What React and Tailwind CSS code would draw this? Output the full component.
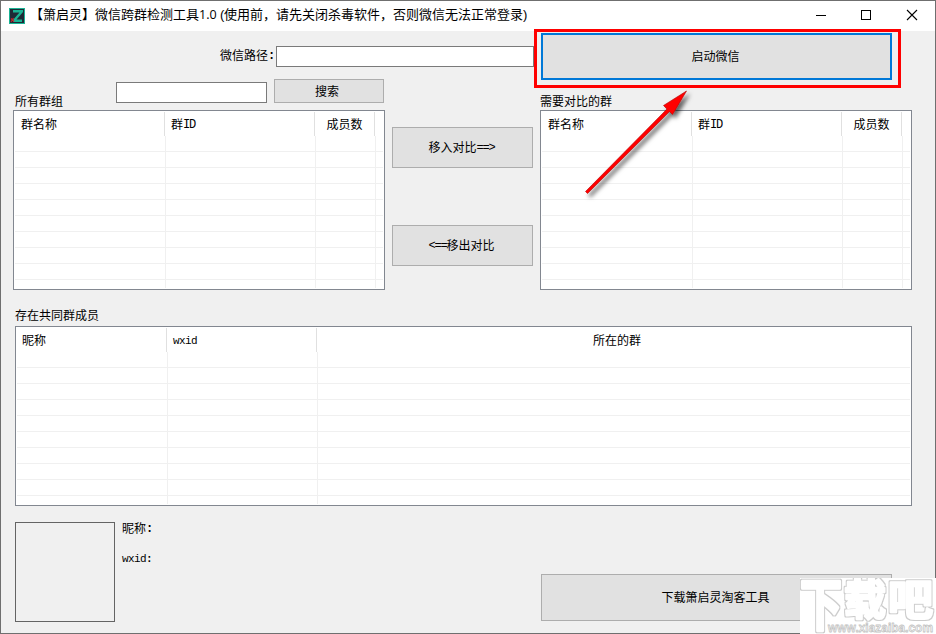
import React from "react";
import clsx from "clsx";

const groupColumns = [
  { label: "群名称", width: "w-[150px]", pad: "pl-1.5" },
  { label: "群", suffix: "ID", width: "w-[150px]", pad: "pl-1.5" },
  { label: "成员数", width: "w-[60px]", center: true },
];

const memberColumns = [
  { label: "昵称", width: "w-[150px]", pad: "pl-[5px]" },
  { suffix: "wxid", width: "w-[150px]", pad: "pl-1.5" },
  { label: "所在的群", width: "w-[600px]", center: true, last: true },
];

// half-width characters, 6px each
function Mono({ children, className }) {
  return (
    <span
      className={clsx(
        "inline-block font-['Liberation_Mono',monospace] leading-3",
        className || "text-xs tracking-[-1.2px]",
      )}
    >
      {children}
    </span>
  );
}

function Button({ children, primary, className }) {
  return (
    <button
      className={clsx(
        "flex shrink-0 items-center justify-center bg-[#e1e1e1]",
        primary ? "border-2 border-[#0078d7]" : "border border-[#adadad]",
        className,
      )}
    >
      {children}
    </button>
  );
}

function ListView({ columns, className }) {
  return (
    <div
      className={clsx(
        "flex h-[180px] shrink-0 flex-col overflow-hidden border border-[#828790] bg-white p-px",
        className,
      )}
    >
      <div className="flex h-6 shrink-0">
        {columns.map((col, idx) => (
          <div
            key={idx}
            className={clsx(
              "flex shrink-0 items-center pt-0.5",
              col.width,
              col.center ? "justify-center" : col.pad,
              !col.last && "border-r border-[#e0e0e0]",
            )}
          >
            {col.label}
            {col.suffix && (
              <Mono className={!col.label && "text-[11px] tracking-[-0.6px]"}>
                {col.suffix}
              </Mono>
            )}
          </div>
        ))}
      </div>
      <div className="grid flex-1 overflow-hidden">
        <div className="col-start-1 row-start-1 flex flex-col">
          {Array.from({ length: 9 }).map((_, idx) => (
            <div key={idx} className="h-4 shrink-0 border-b border-[#f0f0f0]" />
          ))}
        </div>
        <div className="col-start-1 row-start-1 flex pl-px">
          {columns.map((col, idx) => (
            <div
              key={idx}
              className={clsx(
                "shrink-0",
                col.last ? "w-px" : [col.width, "border-r border-[#f0f0f0]"],
              )}
            />
          ))}
        </div>
      </div>
    </div>
  );
}

function TitleBar() {
  return (
    <div className="flex h-[30px] shrink-0 items-center bg-white pl-2">
      <svg className="h-4 w-4 shrink-0" viewBox="0 0 16 16">
        <rect width="16" height="16" fill="#1ab394" />
        <rect x="1" y="1" width="14" height="14" fill="#1f2a36" />
        <path d="M4 2h10v2L7.5 11.500H13V14H4v-2l6.500-7.500H4z" fill="#1ab394" />
        <path d="M2 10.500l3 3M4.500 10l-2.500 4" stroke="#c4252c" strokeWidth="1.2" />
      </svg>
      <div className="flex flex-1 pb-0.5 pl-[5px] text-[13px] leading-4">
        <span className="w-[65px] whitespace-nowrap">【箫启灵】</span>
        <span className="w-[104px] whitespace-nowrap">微信跨群检测工具</span>
        <span className="w-[21px] font-['Open_Sans',sans-serif] text-[12.5px]">
          1.0
        </span>
        <span className="w-1">(</span>
        <span className="whitespace-nowrap">
          使用前，请先关闭杀毒软件，否则微信无法正常登录)
        </span>
      </div>
      <svg
        className="h-[30px] w-[120px] shrink-0"
        viewBox="0 0 120 30"
        fill="none"
        stroke="#000"
        shapeRendering="crispEdges"
      >
        <path d="M1 14.5h10" />
        <path d="M46.5 9.5h9v9h-9z" />
        <path d="M92 9l10 10M102 9L92 19" shapeRendering="auto" strokeWidth="1.1" />
      </svg>
    </div>
  );
}

function Arrow() {
  return (
    <svg
      className="absolute left-[570px] top-[80px] h-[130px] w-[140px]"
      viewBox="570 80 140 130"
    >
      <defs>
        <filter id="shadow" x="-20%" y="-20%" width="150%" height="150%">
          <feDropShadow dx="3" dy="3.5" stdDeviation="2" floodColor="#000" floodOpacity="0.6" />
        </filter>
      </defs>
      <g filter="url(#shadow)" fill="#f00" stroke="#b40000" strokeWidth="0.6">
        <path d="M585.5 191.5L667 109L663.5 105.5L686.5 91L672.5 114.5L669.5 111.5L587.5 193.5Z" />
      </g>
    </svg>
  );
}

function Watermark() {
  return (
    <div className="absolute left-[800px] top-[578px] h-14 w-[136px] overflow-hidden bg-white">
      <svg
        className="h-14 w-[136px]"
        viewBox="0 0 136 56"
        fill="#fff"
        stroke="#fff"
        strokeLinejoin="round"
        fontFamily="Noto Sans CJK SC, sans-serif"
        fontWeight="700"
      >
        <defs>
          <filter id="outline" x="-10%" y="-10%" width="120%" height="120%">
            <feMorphology in="SourceAlpha" operator="dilate" radius="1" result="grown" />
            <feFlood floodColor="#cccccc" />
            <feComposite in2="grown" operator="in" result="edge" />
            <feMerge>
              <feMergeNode in="edge" />
              <feMergeNode in="SourceGraphic" />
            </feMerge>
          </filter>
        </defs>
        <g filter="url(#outline)" strokeWidth="2.5">
          <text fontSize="42" transform="translate(0 47) scale(1 1.32)">
            下
          </text>
          <text x="44" y="37" fontSize="42">
            载
          </text>
          <text x="88" y="37" fontSize="42" textLength="45" lengthAdjust="spacingAndGlyphs">
            吧
          </text>
        </g>
        <text
          x="28"
          y="54"
          fontSize="12.5"
          stroke="#c4c4c4"
          strokeWidth="0.8"
          textLength="105"
          lengthAdjust="spacingAndGlyphs"
          fontFamily="Liberation Sans, sans-serif"
        >
          www.xiazaiba.com
        </text>
      </svg>
    </div>
  );
}

export default function App() {
  return (
    <div className="relative h-[634px] w-[936px] overflow-hidden font-['Liberation_Sans','Noto_Sans_CJK_SC',sans-serif] text-xs leading-3 text-black">
      <div className="flex h-[634px] flex-col overflow-hidden border border-[#6f6f6f] bg-[#f0f0f0]">
        <TitleBar />

        <div className="flex h-[79px] shrink-0">
          <div className="flex w-[533px] shrink-0 flex-col pt-[15px]">
            <div className="flex h-[21px] items-center pl-[219px]">
              <span className="w-12 whitespace-nowrap pb-0.5">微信路径</span>
              <Mono className="w-2 pb-0.5 text-xs font-bold">:</Mono>
              <input className="h-[21px] min-w-0 flex-1 border border-[#7a7a7a] bg-white" />
            </div>
            <div className="mt-3 flex pl-[14px]">
              <span className="w-[101px] pt-[17px]">所有群组</span>
              <input className="mt-[3px] h-[21px] w-[151px] border border-[#7a7a7a] bg-white" />
              <Button className="ml-[7px] h-6 w-[110px] pr-1 pt-0.5">搜索</Button>
            </div>
          </div>
          <div className="flex flex-col pt-0.5">
            <Button primary className="ml-[7px] h-[47px] w-[351px] pr-0.5">
              启动微信
            </Button>
            <span className="ml-[6px] mt-4">需要对比的群</span>
          </div>
        </div>

        <div className="flex shrink-0 pl-3">
          <ListView columns={groupColumns} className="w-[372px]" />
          <div className="flex w-[155px] shrink-0 flex-col items-center gap-[57px] pt-[17px]">
            <Button className="h-[41px] w-[141px] pr-0.5">
              移入对比<Mono>==&gt;</Mono>
            </Button>
            <Button className="h-[41px] w-[141px] pr-0.5">
              <Mono>&lt;==</Mono>移出对比
            </Button>
          </div>
          <ListView columns={groupColumns} className="w-[372px]" />
        </div>

        <div className="flex shrink-0 flex-col pl-[14px] pt-5">
          <span className="mb-1">存在共同群成员</span>
          <ListView columns={memberColumns} className="w-[897px]" />
        </div>

        <div className="flex shrink-0 pl-[14px] pt-4">
          <div className="h-[100px] w-[100px] shrink-0 border border-[#646464]" />
          <div className="flex w-[426px] shrink-0 flex-col gap-[18px] pl-[7px] pt-px">
            <span className="flex">
              昵称<Mono className="text-xs font-bold">:</Mono>
            </span>
            <Mono className="text-[11px] tracking-[-0.6px]">
              wxid<b>:</b>
            </Mono>
          </div>
          <Button className="mt-[52px] h-[47px] w-[351px] pr-0.5">
            下载箫启灵淘客工具
          </Button>
        </div>
      </div>

      <div className="absolute left-[534px] top-[29px] h-[59px] w-[367px] border-3 border-[#f00]" />
      <Arrow />
      <Watermark />
    </div>
  );
}
